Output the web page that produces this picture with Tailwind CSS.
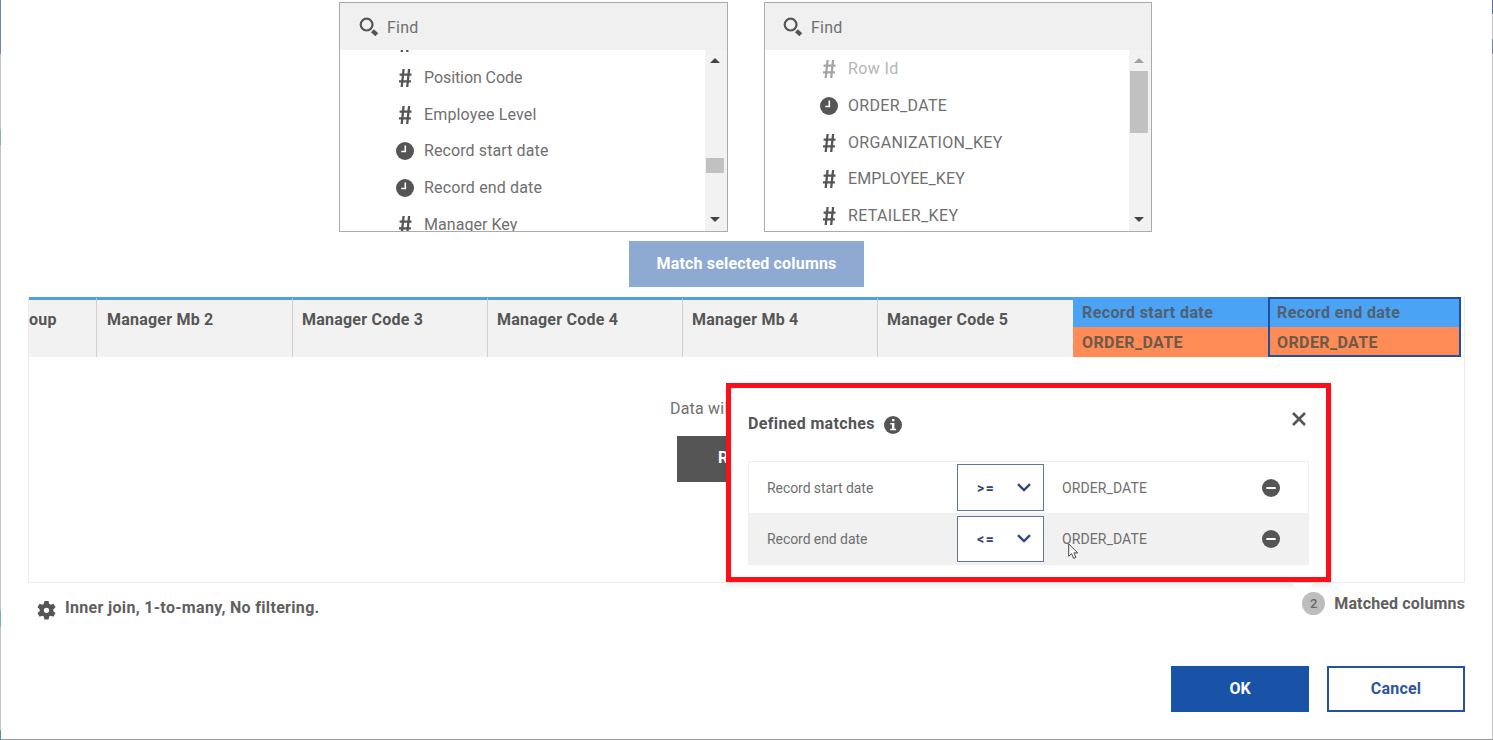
<!DOCTYPE html>
<html lang="en">
<head>
  <meta charset="UTF-8" />
  <meta name="viewport" content="width=device-width, initial-scale=1.0" />
  <title>Join tables – Match columns</title>
  <script src="https://cdn.jsdelivr.net/npm/@tailwindcss/browser@4"></script>
</head>
<body class="bg-white overflow-hidden font-['Roboto',sans-serif] text-base text-[#6f6f6f]">
  <!-- Shared icons -->
  <svg class="hidden">
    <symbol id="search" viewBox="0 0 20 20">
      <circle cx="7.6" cy="7.6" r="5.9" fill="none" stroke="#555" stroke-width="2.2" />
      <path d="M13.4 13.7l4.4 4.1" stroke="#555" stroke-width="4.2" />
    </symbol>
    <symbol id="hash" viewBox="0 0 14 20">
      <path d="M5.6 1L3.7 19M11.1 1L9.2 19M1.6 6.7h11.9M1 13.3h11.9" fill="none" stroke="currentColor" stroke-width="2.3" />
    </symbol>
    <symbol id="clock" viewBox="0 0 18 18">
      <circle cx="9" cy="9" r="9" fill="#555" />
      <path d="M9.3 3.6v5.9H5.2" fill="none" stroke="#fff" stroke-width="1.6" />
    </symbol>
    <symbol id="chevron" viewBox="0 0 14 9">
      <path d="M1 1.2l6 5.8 6-5.8" fill="none" stroke="#2f4688" stroke-width="2.4" />
    </symbol>
    <symbol id="minus" viewBox="0 0 18 18">
      <circle cx="9" cy="9" r="9" fill="#555" />
      <path d="M4.3 9h9.4" stroke="#fff" stroke-width="2" />
    </symbol>
  </svg>

  <main class="relative h-[740px] border-x border-b border-x-[#c4c4c4] border-b-[#999]">
    <!-- Strips of the page behind the dialog -->
    <div class="absolute -left-px top-0 w-px h-[54px] bg-[#7188ae]"></div>
    <div class="absolute -left-px top-[130px] w-px h-[15px] bg-[#80b5a2]"></div>
    <div class="absolute -left-px top-[611px] w-px h-4 bg-[#72b0ac]"></div>
    <div class="absolute -left-px top-[730px] w-px h-[10px] bg-[#4a9b95]"></div>
    <div class="absolute -right-px top-0 w-px h-[14px] bg-[#53719d]"></div>
    <div class="absolute -right-px top-[39px] w-px h-[15px] bg-[#7080a0]"></div>

    <!-- Column lists -->
    <section class="flex gap-9 pt-0.5 pl-[338px]">
      <div class="flex flex-col w-[389px] h-[230px] border border-[#ababab]">
        <div class="flex items-center shrink-0 h-[47px] pt-px pl-[19px] gap-2 bg-[#f0f0f0]">
          <svg class="size-5"><use href="#search" /></svg>
          <span class="pt-0.5 tracking-[.2px]">Find</span>
        </div>
        <div class="flex flex-1 min-h-0">
          <ul class="flex-1 overflow-hidden pl-[58px] tracking-[.05px]">
            <li class="flex items-center gap-3 h-[36.7px] -mt-[27px] pt-1"><svg class="w-3.5 h-5 text-[#555]"><use href="#hash" /></svg></li>
            <li class="flex items-center gap-3 h-[36.7px] tracking-[-.08px]"><svg class="w-3.5 h-5 text-[#555]"><use href="#hash" /></svg>Position Code</li>
            <li class="flex items-center gap-3 h-[36.7px] tracking-[.15px]"><svg class="w-3.5 h-5 text-[#555]"><use href="#hash" /></svg>Employee Level</li>
            <li class="flex items-center gap-2.5 h-[36.7px] -ml-0.5 tracking-[.1px]"><svg class="size-[18px]"><use href="#clock" /></svg>Record start date</li>
            <li class="flex items-center gap-2.5 h-[36.7px] -ml-0.5 tracking-[.15px]"><svg class="size-[18px]"><use href="#clock" /></svg>Record end date</li>
            <li class="flex items-center gap-3 h-[36.7px]"><svg class="w-3.5 h-5 text-[#555]"><use href="#hash" /></svg>Manager Key</li>
          </ul>
          <div class="flex flex-col items-center w-[22px] pt-2 pb-[9px] pr-0.5 bg-[#f2f2f2]">
            <svg class="w-2.5 h-[5px]" viewBox="0 0 10 5"><path d="M0 5l5-5 5 5z" fill="#444" /></svg>
            <div class="w-[18px] h-[15px] mt-[95px] mb-auto bg-[#c1c1c1]"></div>
            <svg class="w-2.5 h-[5px]" viewBox="0 0 10 5"><path d="M0 0l5 5 5-5z" fill="#444" /></svg>
          </div>
        </div>
      </div>

      <div class="flex flex-col w-[388px] h-[230px] border border-[#ababab]">
        <div class="flex items-center shrink-0 h-[47px] pt-px pl-[18px] gap-2 bg-[#f0f0f0]">
          <svg class="size-5"><use href="#search" /></svg>
          <span class="pt-0.5 tracking-[.2px]">Find</span>
        </div>
        <div class="flex flex-1 min-h-0">
          <ul class="flex-1 overflow-hidden pt-px pl-[57px] tracking-[.33px]">
            <li class="flex items-center gap-3 h-[36.7px] text-[#b5b5b5] tracking-[.4px]"><svg class="w-3.5 h-5 text-[#a5a5a5]"><use href="#hash" /></svg>Row Id</li>
            <li class="flex items-center gap-2.5 h-[36.7px] -ml-0.5"><svg class="size-[18px]"><use href="#clock" /></svg>ORDER_DATE</li>
            <li class="flex items-center gap-3 h-[36.7px]"><svg class="w-3.5 h-5 text-[#555]"><use href="#hash" /></svg>ORGANIZATION_KEY</li>
            <li class="flex items-center gap-3 h-[36.7px] tracking-[.1px]"><svg class="w-3.5 h-5 text-[#555]"><use href="#hash" /></svg>EMPLOYEE_KEY</li>
            <li class="flex items-center gap-3 h-[36.7px]"><svg class="w-3.5 h-5 text-[#555]"><use href="#hash" /></svg>RETAILER_KEY</li>
          </ul>
          <div class="flex flex-col items-center w-[22px] pt-2 pb-[9px] pr-0.5 bg-[#f2f2f2]">
            <svg class="w-2.5 h-[5px]" viewBox="0 0 10 5"><path d="M0 5l5-5 5 5z" fill="#a3a3a3" /></svg>
            <div class="w-[18px] h-[62px] mt-2 mb-auto bg-[#c1c1c1]"></div>
            <svg class="w-2.5 h-[5px]" viewBox="0 0 10 5"><path d="M0 0l5 5 5-5z" fill="#444" /></svg>
          </div>
        </div>
      </div>
    </section>

    <button class="block w-[235px] h-[46px] mt-[9px] ml-[628px] pb-px bg-[#8eaad3] text-white font-bold tracking-[.18px]">Match selected columns</button>

    <!-- Preview grid -->
    <section class="ml-[27px] mt-2.5 w-[1437px] h-[286px] border-x border-b border-[#ececec]">
      <div class="flex h-[60px] font-bold text-[#565656] tracking-[.22px]">
        <div class="w-[68px] border-t-3 border-t-[#509fe0] border-r border-r-[#d0d0d0] bg-[#f2f2f2] pt-2">oup</div>
        <div class="w-[196px] border-t-3 border-t-[#509fe0] border-r border-r-[#d0d0d0] bg-[#f2f2f2] pt-2 pl-2.5">Manager Mb 2</div>
        <div class="w-[195px] border-t-3 border-t-[#509fe0] border-r border-r-[#d0d0d0] bg-[#f2f2f2] pt-2 pl-[9px]">Manager Code 3</div>
        <div class="w-[195px] border-t-3 border-t-[#509fe0] border-r border-r-[#d0d0d0] bg-[#f2f2f2] pt-2 pl-[9px]">Manager Code 4</div>
        <div class="w-[195px] border-t-3 border-t-[#509fe0] border-r border-r-[#d0d0d0] bg-[#f2f2f2] pt-2 pl-[9px]">Manager Mb 4</div>
        <div class="w-[195px] border-t-3 border-t-[#509fe0] bg-[#f2f2f2] pt-2 pl-[9px]">Manager Code 5</div>
        <div class="w-[195px] leading-[31px] text-[#52606e] tracking-[.4px]">
          <div class="h-[30px] pl-[9px] bg-[#4aa3f5]">Record start date</div>
          <div class="h-[30px] pl-[9px] bg-[#ff8b57] text-[#6d5a49]">ORDER_DATE</div>
        </div>
        <div class="w-[193px] border-2 border-[#1f51a0] leading-[28px] text-[#52606e] tracking-[.4px]">
          <div class="h-7 pl-[7px] bg-[#4aa3f5]">Record end date</div>
          <div class="h-7 pl-[7px] bg-[#ff8b57] text-[#6d5a49] leading-[31px]">ORDER_DATE</div>
        </div>
      </div>
      <div class="flex flex-col pt-10 pl-[641px]">
        <span class="tracking-[.2px]">Data wil</span>
        <button class="w-[138px] h-[46px] mt-[15px] ml-[7px] pb-0.5 pl-[41px] bg-[#555] text-left text-white font-bold">R</button>
      </div>
    </section>

    <!-- Join summary -->
    <section class="flex justify-between h-[83px] pl-9 pr-[27px] font-bold text-[#606060]">
      <div class="flex gap-[9px] pt-[13px] tracking-[.32px]">
        <svg class="size-[19px] mt-[5px]" viewBox="0 0 20 20">
          <path d="M7.8 0h4.4l.6 3 1.6.9 2.9-1 2.2 3.8-2.3 2v2l2.3 2-2.2 3.8-2.9-1-1.6.9-.6 3H7.8l-.6-3-1.6-.9-2.9 1-2.2-3.8 2.3-2v-2l-2.3-2 2.2-3.8 2.9 1 1.6-.9zM10 7a2.8 2.8 0 100 5.6A2.8 2.8 0 0010 7z" fill="#555" fill-rule="evenodd" />
        </svg>
        Inner join, 1-to-many, No filtering.
      </div>
      <div class="flex gap-[9px] pt-[9px] tracking-[.15px]">
        <span class="flex items-center justify-center size-[23px] rounded-full bg-[#bdbdbd] text-[13px] font-medium text-[#666]">2</span>
        Matched columns
      </div>
    </section>

    <footer class="flex justify-end gap-[18px] pr-[27px] font-bold">
      <button class="w-[138px] h-[46px] pb-px bg-[#1853a8] text-white">OK</button>
      <button class="w-[138px] h-[46px] pb-px border-2 border-[#2750a0] text-[#3055a0] tracking-[.2px]">Cancel</button>
    </footer>

    <!-- Defined matches popover -->
    <div class="absolute left-[725px] top-[383px] w-[605px] h-[199px] border-5 border-[#fb0f1b] bg-white shadow-[0_4px_5px_rgba(0,0,0,0.08)]">
      <div class="flex items-start justify-between h-[73px] pl-[17px] pr-5 pt-6">
        <h2 class="flex items-center gap-[9px] font-bold text-[#555] tracking-[.35px]">
          Defined matches
          <svg class="size-[18px] mt-px" viewBox="0 0 18 18">
            <circle cx="9" cy="9" r="9" fill="#555" />
            <path d="M8 3h2.4v2.2H8zM6.3 7h4.1v5.7h1.7v1.6H6.3v-1.6H8V8.6H6.3z" fill="#fff" />
          </svg>
        </h2>
        <svg class="size-3.5" viewBox="0 0 14 14"><path d="M1 1l12 12M13 1L1 13" stroke="#555" stroke-width="2.6" /></svg>
      </div>
      <div class="w-[561px] ml-[17px] border border-[#efefef] text-sm text-[#6f6f6f] tracking-[-.07px]">
        <div class="flex items-center h-[51px] pl-[18px]">
          <span class="w-[190px]">Record start date</span>
          <div class="flex items-center justify-between w-[87px] h-[47px] pl-[19px] pr-3 border border-[#6474a2] bg-white font-bold text-[#35446f] tracking-[1.5px]">&gt;=<svg class="w-3.5 h-[9px]"><use href="#chevron" /></svg></div>
          <span class="ml-[18px] w-[200px] tracking-[.1px]">ORDER_DATE</span>
          <svg class="size-[18px]"><use href="#minus" /></svg>
        </div>
        <div class="flex items-center h-[51px] pl-[18px] bg-[#f1f1f1]">
          <span class="w-[190px]">Record end date</span>
          <div class="flex items-center justify-between w-[87px] h-[46px] pl-[19px] pr-3 border border-[#6474a2] bg-white font-bold text-[#35446f] tracking-[1.5px]">&lt;=<svg class="w-3.5 h-[9px]"><use href="#chevron" /></svg></div>
          <span class="ml-[18px] w-[200px] tracking-[.1px]">ORDER_DATE</span>
          <svg class="size-[18px]"><use href="#minus" /></svg>
        </div>
      </div>
      <!-- Pointer towards the match counter -->
      <svg class="absolute left-[561px] top-[195px] w-[22px] h-[11px]" viewBox="0 0 22 11"><path d="M0 0h22L11 11z" fill="#fff" /></svg>
    </div>

    <!-- Mouse cursor -->
    <svg class="absolute left-[1067px] top-[543px] w-3 h-[17px]" viewBox="0 0 12 17">
      <path d="M.7 1v12.3l2.9-2.6 2 4.7 2.3-1-2-4.5h3.9z" fill="#fff" stroke="#444" stroke-width="1" />
    </svg>
  </main>
</body>
</html>
